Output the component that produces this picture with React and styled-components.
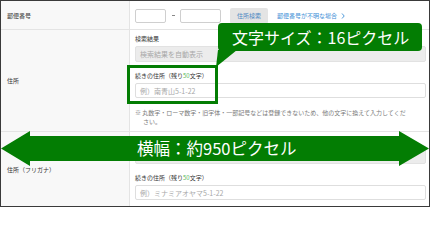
import React from 'react';
import styled, { createGlobalStyle } from 'styled-components';

const GREEN = '#037d03';

const GlobalStyle = createGlobalStyle`
    body {
        margin: 0;
        background: #ffffff;
        font-family: "Noto Sans CJK JP", "Noto Sans", sans-serif;
    }
`

const Frame = styled.div`
    position: relative;
    width: 430px;
    height: 207px;
    box-sizing: border-box;
    border: 1px solid #3a3a3a;
    background: #ffffff;
    overflow: hidden;
`

const Row = styled.div`
    display: grid;
    grid-template-columns: 129px 1fr;
    height: ${props => props.height}px;
    box-sizing: border-box;
    border-bottom: ${props => props.last ? 'none' : '1px solid #e4e4e4'};
`

const Label = styled.div`
    display: flex;
    align-items: center;
    padding-left: 6px;
    background: #f8f8f8;
    border-right: 1px solid #e4e4e4;
    font-size: 6px;
    color: #333333;
`

const Field = styled.div`
    display: flex;
    flex-direction: ${props => props.column ? 'column' : 'row'};
    align-items: ${props => props.column ? 'stretch' : 'center'};
    padding: ${props => props.column ? '4px 3px 0 5px' : '1px 0 0 5px'};
`

const ZipInput = styled.div`
    width: ${props => props.width}px;
    height: 14px;
    box-sizing: border-box;
    border: 1px solid #cfcfcf;
    border-radius: 2px;
    background: #ffffff;
`

const Dash = styled.span`
    width: 3px;
    height: 1px;
    margin: 0 5px 0 6px;
    background: #888888;
`

const SearchButton = styled.div`
    display: flex;
    align-items: center;
    justify-content: center;
    width: 38px;
    height: 16px;
    margin-left: 9px;
    border-radius: 2px;
    background: #e4e4e4;
    color: #4a86c2;
    font-size: 6px;
`

const HelpLink = styled.div`
    display: flex;
    align-items: center;
    gap: 4px;
    margin-left: 9px;
    color: #3d8ed6;
    font-size: 6px;
`

const SubLabel = styled.div`
    height: 9px;
    line-height: 9px;
    margin-top: ${props => props.gap || 0}px;
    font-size: 6px;
    color: #333333;
`

const Count = styled.span`
    color: #5cb85c;
`

const Box = styled.div`
    display: flex;
    align-items: center;
    height: ${props => props.readOnly ? 16 : 15}px;
    margin-top: ${props => props.gap || 0}px;
    padding-left: 4px;
    box-sizing: border-box;
    border: 1px solid ${props => props.readOnly ? '#e2e2e2' : '#dedede'};
    border-radius: 2px;
    background: ${props => props.readOnly ? '#ececec' : '#ffffff'};
    color: #a8a8a8;
    font-size: 7px;
`

const Note = styled.div`
    margin-top: 10px;
    padding-left: 8px;
    text-indent: -8px;
    line-height: 9px;
    font-size: 6px;
    color: #7a7a7a;
`

const Highlight = styled.div`
    position: absolute;
    left: 126px;
    top: 64px;
    width: 91px;
    height: 39px;
    box-sizing: border-box;
    border: 3px solid ${GREEN};
`

const Callout = styled.div`
    position: absolute;
    left: 217px;
    top: 22px;
    width: 204px;
    height: 28px;
    display: flex;
    align-items: center;
    padding-left: 14px;
    box-sizing: border-box;
    border-radius: 4px;
    background: ${GREEN};
    color: #ffffff;
    font-size: 16px;
    white-space: nowrap;
`

const Tail = styled.svg`
    position: absolute;
    left: -3px;
    top: 27px;
`

const WidthArrow = styled.div`
    position: absolute;
    left: 0;
    top: 130px;
    width: 428px;
    height: 35px;
    display: flex;
    align-items: center;
    padding-left: 136px;
    box-sizing: border-box;
    color: #ffffff;
    font-size: 16.5px;
    white-space: nowrap;
`

const ArrowShape = styled.svg`
    position: absolute;
    left: 0;
    top: 0;
`

const ArrowText = styled.span`
    position: relative;
    margin-top: -1px;
`

const Chevron = () => (
    <svg width="4" height="6" viewBox="0 0 4 6">
        <path d="M1 0.5 L3.2 3 L1 5.5" fill="none" stroke="#3d8ed6" strokeWidth="0.9" />
    </svg>
)

const AddressFields = ({ placeholder }) => (
    <>
        <SubLabel>検索結果</SubLabel>
        <Box readOnly gap={3}>検索結果を自動表示</Box>
        <SubLabel gap={9}>続きの住所（残り<Count>50</Count>文字）</SubLabel>
        <Box gap={3}>{placeholder}</Box>
    </>
)

export default function App () {
    return (
        <>
            <GlobalStyle />
            <Frame>
                <Row height={29}>
                    <Label>郵便番号</Label>
                    <Field>
                        <ZipInput width={31} />
                        <Dash />
                        <ZipInput width={41} />
                        <SearchButton>住所検索</SearchButton>
                        <HelpLink>郵便番号が不明な場合<Chevron /></HelpLink>
                    </Field>
                </Row>
                <Row height={102}>
                    <Label>住所</Label>
                    <Field column>
                        <AddressFields placeholder="例）南青山5-1-22" />
                        <Note>
                            ※ 丸数字・ローマ数字・旧字体・一部記号などは登録できないため、他の文字に換えて入力してくだ<br />さい。
                        </Note>
                    </Field>
                </Row>
                <Row height={74} last>
                    <Label>住所（フリガナ）</Label>
                    <Field column>
                        <AddressFields placeholder="例）ミナミアオヤマ5-1-22" />
                    </Field>
                </Row>

                <Highlight />
                <Callout>
                    <Tail width="23" height="17" viewBox="0 0 23 17">
                        <polygon points="3,0 22,0 1,17" fill={GREEN} />
                    </Tail>
                    文字サイズ：16ピクセル
                </Callout>
                <WidthArrow>
                    <ArrowShape width="428" height="35" viewBox="0 0 428 35">
                        <polygon
                            points="0,17.5 29,0 29,5 398,5 398,0 428,17.5 398,35 398,30 29,30 29,35"
                            fill={GREEN}
                        />
                    </ArrowShape>
                    <ArrowText>横幅：約950ピクセル</ArrowText>
                </WidthArrow>
            </Frame>
        </>
    )
}
